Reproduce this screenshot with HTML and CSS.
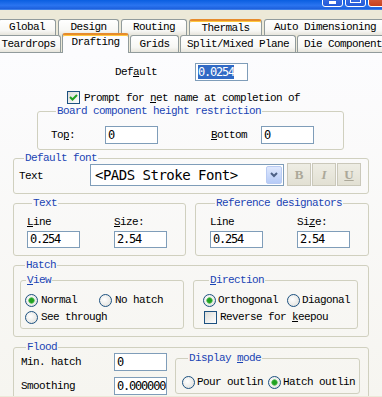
FILE: index.html
```html
<!DOCTYPE html>
<html lang="en">
<head>
  <meta charset="UTF-8" />
  <meta name="viewport" content="width=device-width, initial-scale=1.0" />
  <title>Preferences</title>
  <link rel="stylesheet" href="styles.css">
</head>
<body>
  <div class="titlebar">
    <span class="title">Preferences</span>
    <div class="winbtns">
      <span class="wb wb-min"></span>
      <span class="wb wb-max"></span>
      <span class="wb wb-close"></span>
    </div>
  </div>

  <div class="tabs">
    <div class="tabrow row1">
      <div class="tab t-global">Global</div>
      <div class="tab t-design">Design</div>
      <div class="tab t-routing">Routing</div>
      <div class="tab t-thermals hot">Thermals</div>
      <div class="tab t-autodim">Auto Dimensioning</div>
    </div>
    <div class="tabrow row2">
      <div class="tab t-teardrops">Teardrops</div>
      <div class="tab t-drafting active">Drafting</div>
      <div class="tab t-grids">Grids</div>
      <div class="tab t-split">Split/Mixed Plane</div>
      <div class="tab t-die">Die Component</div>
    </div>
  </div>

  <div class="panel">
    <div class="default-row">
      <span class="lbl-default">Def<u>a</u>ult</span>
      <div class="field"><span class="hl">0.0254</span></div>
    </div>

    <div class="check-row">
      <span class="check">
        <svg width="11" height="11" viewBox="0 0 11 11"><path d="M2 5 L4.5 7.5 L9 3" fill="none" stroke="#21a121" stroke-width="2"/></svg>
      </span>
      <span class="check-label">Prompt for <u>n</u>et name at completion of</span>
    </div>

    <fieldset class="grp g-board">
      <legend>Board component height restriction</legend>
      <div class="board-row">
        <span class="lbl-top">To<u>p</u>:</span>
        <div class="field">0</div>
        <span class="lbl-bottom"><u>B</u>ottom</span>
        <div class="field">0</div>
      </div>
    </fieldset>

    <fieldset class="grp g-font">
      <legend>Default font</legend>
      <div class="font-row">
        <span class="lbl-text">Text</span>
        <div class="combo">
          <span class="combo-text">&lt;PADS Stroke Font&gt;</span>
          <span class="combo-btn">
            <svg width="8" height="6" viewBox="0 0 8 6"><path d="M1 1 L4 4 L7 1" fill="none" stroke="#4d6185" stroke-width="2"/></svg>
          </span>
        </div>
        <div class="fbtns">
          <span class="fbtn">B</span>
          <span class="fbtn fi">I</span>
          <span class="fbtn fu">U</span>
        </div>
      </div>
    </fieldset>

    <div class="two">
      <fieldset class="grp g-text">
        <legend>Text</legend>
        <div class="pair">
          <div class="col">
            <span class="lbl"><u>L</u>ine</span>
            <div class="field f17">0.254</div>
          </div>
          <div class="col">
            <span class="lbl"><u>S</u>ize:</span>
            <div class="field f17">2.54</div>
          </div>
        </div>
      </fieldset>
      <fieldset class="grp g-ref">
        <legend>Reference designators</legend>
        <div class="pair">
          <div class="col">
            <span class="lbl">Line</span>
            <div class="field f17">0.254</div>
          </div>
          <div class="col">
            <span class="lbl">Si<u>z</u>e:</span>
            <div class="field f17">2.54</div>
          </div>
        </div>
      </fieldset>
    </div>

    <fieldset class="grp g-hatch">
      <legend>Hatch</legend>
      <div class="hatch-row">
        <fieldset class="grp g-view">
          <legend><u>V</u>iew</legend>
          <div class="opt-row">
            <span class="opt w-normal"><span class="radio on"></span>Normal</span>
            <span class="opt"><span class="radio"></span>No hatch</span>
          </div>
          <div class="opt-row">
            <span class="opt"><span class="radio"></span>See through</span>
          </div>
        </fieldset>
        <fieldset class="grp g-dir">
          <legend><u>D</u>irection</legend>
          <div class="opt-row">
            <span class="opt w-ortho"><span class="radio on"></span>Orthogonal</span>
            <span class="opt"><span class="radio"></span>Diagonal</span>
          </div>
          <div class="opt-row">
            <span class="opt opt-check"><span class="check"></span><span>Reverse for <u>k</u>eepou</span></span>
          </div>
        </fieldset>
      </div>
    </fieldset>

    <fieldset class="grp g-flood">
      <legend>Flood</legend>
      <div class="flood-body">
        <div class="flood-left">
          <div class="flood-row">
            <span class="lbl-flood">Min. hatch</span>
            <div class="field">0</div>
          </div>
          <div class="flood-row">
            <span class="lbl-flood">Smoothing</span>
            <div class="field">0.000000</div>
          </div>
        </div>
        <fieldset class="grp g-display">
          <legend>Display <u>m</u>ode</legend>
          <div class="opt-row">
            <span class="opt w-pour"><span class="radio"></span>Pour outlin</span>
            <span class="opt"><span class="radio on"></span>Hatch outlin</span>
          </div>
        </fieldset>
      </div>
    </fieldset>
  </div>
</body>
</html>
```

FILE: styles.css
```css
* {
  box-sizing: border-box;
}
body {
  margin: 0;
  width: 382px;
  height: 397px;
  overflow: hidden;
  background-color: #ece9d8;
  color: #000;
  font-family: "Liberation Mono", monospace;
  font-size: 11px;
  line-height: 12px;
  letter-spacing: -0.6px;
}
u {
  text-decoration: underline;
  text-underline-offset: 1px;
}

/* title bar, mostly cut off at the top */
.titlebar {
  height: 10px;
  overflow: hidden;
  display: flex;
  justify-content: space-between;
  background: linear-gradient(#0a5ee0, #2a74f0 60%, #1d5fdc);
  border-bottom: 1px solid #3d7ee8;
}
.title {
  margin: -10px 0 0 6px;
  color: #fff;
  font-size: 13px;
  line-height: 14px;
  font-weight: bold;
  letter-spacing: 0;
}
.winbtns {
  display: flex;
  gap: 2px;
  margin-top: -14px;
  margin-right: -7px;
}
.wb {
  width: 21px;
  height: 21px;
  border: 1px solid #fff;
  border-radius: 3px;
  background: linear-gradient(#5a8cf2, #2359d8);
  display: flex;
  align-items: flex-end;
  justify-content: center;
}
.wb-min::after {
  content: "";
  width: 7px;
  height: 3px;
  margin-bottom: 2px;
  background: #fff;
}
.wb-max::after {
  content: "";
  width: 9px;
  height: 8px;
  margin-bottom: 3px;
  border: 1px solid #fff;
  border-top-width: 2px;
}
.wb-close {
  background: linear-gradient(#e98266, #c8401e);
}

/* tabs */
.tabs {
  padding-top: 9px;
}
.tabrow {
  display: flex;
}
.row1 {
  gap: 2px;
  margin-left: -2px;
  height: 16px;
}
.row2 {
  gap: 1px;
  margin-left: -4px;
  height: 17px;
}
.tab {
  flex: none;
  border: 1px solid #919b9c;
  border-bottom: none;
  border-radius: 3px 3px 0 0;
  background: linear-gradient(#ffffff, #f7f7f4 70%, #e7e5dc);
  text-align: center;
  line-height: 15px;
  white-space: nowrap;
}
.row2 .tab {
  line-height: 16px;
}
.tab.hot {
  border-top: 2px solid #e68b2c;
  box-shadow: inset 0 1px 0 #ffc73c;
  line-height: 14px;
}
.tab.active {
  position: relative;
  z-index: 1;
  margin-top: -2px;
  height: 20px;
  background: #fcfcfe;
  border-top: 2px solid #e68b2c;
  box-shadow: inset 0 1px 0 #ffc73c;
  line-height: 14px;
}
.t-global { width: 58px; }
.t-design { width: 61px; }
.t-routing { width: 66px; }
.t-thermals { width: 73px; }
.t-autodim { width: 122px; }
.t-teardrops { width: 65px; }
.t-drafting { width: 67px; }
.t-grids { width: 49px; }
.t-split { width: 116px; }
.t-die { width: 92px; }

/* panel */
.panel {
  height: 344px;
  border-top: 1px solid #919b9c;
  background: linear-gradient(#fcfcfe, #f6f5f0);
  overflow: hidden;
}

.field {
  flex: none;
  width: 53px;
  height: 18px;
  padding-left: 2px;
  border: 1px solid #7f9db9;
  background: #fff;
  font-family: "DejaVu Sans Mono", monospace;
  font-size: 12px;
  line-height: 16px;
  letter-spacing: -1.2px;
  white-space: nowrap;
  overflow: hidden;
}
.field.f17 {
  height: 17px;
  line-height: 15px;
}
.hl {
  background: #316ac5;
  color: #fff;
}

.default-row {
  display: flex;
  align-items: center;
  margin: 10px 0 0 115px;
}
.lbl-default {
  width: 80px;
}

.check-row {
  display: flex;
  align-items: center;
  margin: 10px 0 0 67px;
  gap: 4px;
}
.check {
  flex: none;
  width: 13px;
  height: 13px;
  border: 1px solid #1c5180;
  background: linear-gradient(135deg, #dcdcd7, #fff);
}
.check svg {
  display: block;
}

/* group boxes */
.grp {
  margin: 0;
  min-width: 0;
  border: 1px solid #d0d0bf;
  border-radius: 3px;
}
.grp legend {
  margin-left: 5px;
  padding: 0 1px;
  color: #1a44b4;
  line-height: 12px;
  white-space: nowrap;
}

.g-board {
  margin: 1px 0 0 37px;
  width: 307px;
  padding: 9px 0 5px 13px;
}
.board-row {
  display: flex;
  align-items: center;
}
.lbl-top {
  width: 54px;
}
.lbl-bottom {
  width: 50px;
  margin-left: 53px;
}

.g-font {
  margin: 2px 0 0 13px;
  width: 356px;
  padding: 0 0 7px 5px;
}
.font-row {
  display: flex;
  align-items: flex-start;
}
.lbl-text {
  width: 71px;
  margin-top: 6px;
}
.combo {
  width: 194px;
  height: 22px;
  border: 1px solid #7f9db9;
  background: #fff;
  display: flex;
  align-items: center;
}
.combo-text {
  flex: 1;
  padding-left: 4px;
  font-family: "DejaVu Sans Mono", monospace;
  font-size: 14px;
  letter-spacing: -0.5px;
  white-space: nowrap;
}
.combo-btn {
  width: 16px;
  height: 18px;
  margin-right: 1px;
  border: 1px solid #b9cbf3;
  border-radius: 2px;
  background: linear-gradient(#dfe8fd, #b6cbf7);
  display: flex;
  align-items: center;
  justify-content: center;
}
.combo-btn svg {
  display: block;
}
.fbtns {
  display: flex;
  gap: 1px;
  margin: -1px 0 0 3px;
}
.fbtn {
  width: 24px;
  height: 23px;
  border: 1px solid #cac8ba;
  background: linear-gradient(#eeede4, #e2e0d3);
  color: #aca899;
  font-family: "Liberation Serif", serif;
  font-size: 13px;
  font-weight: bold;
  letter-spacing: 0;
  display: flex;
  align-items: center;
  justify-content: center;
}
.fi {
  font-style: italic;
}
.fu {
  text-decoration: underline;
}

.two {
  display: flex;
  gap: 9px;
  margin: 3px 0 0 13px;
}
.g-text {
  width: 173px;
  padding: 7px 0 7px 13px;
}
.g-ref {
  width: 174px;
  padding: 7px 0 7px 14px;
}
.pair {
  display: flex;
  gap: 34px;
}
.col {
  width: 53px;
  display: flex;
  flex-direction: column;
  gap: 3px;
}

.g-hatch {
  margin: 3px 0 0 13px;
  width: 356px;
  padding: 3px 0 7px 6px;
}
.hatch-row {
  display: flex;
  gap: 9px;
}
.g-view {
  width: 164px;
  padding: 6px 0 3px 4px;
}
.g-view legend {
  margin-left: 1px;
}
.g-dir {
  width: 165px;
  padding: 6px 0 3px 9px;
}
.g-dir legend {
  margin-left: 6px;
}
.opt-row {
  display: flex;
  align-items: center;
  height: 16px;
  margin-bottom: 1px;
}
.opt-row:last-child {
  margin-bottom: 0;
}
.opt {
  display: flex;
  align-items: center;
  gap: 3px;
  white-space: nowrap;
}
.g-dir .opt,
.g-display .opt {
  gap: 2px;
}
.g-dir .opt-check {
  gap: 3px;
  margin-left: 1px;
}
.w-normal { width: 74px; }
.w-ortho { width: 84px; }
.w-pour { width: 86px; }
.radio {
  flex: none;
  width: 13px;
  height: 13px;
  border: 1px solid #1c5180;
  border-radius: 50%;
  background: radial-gradient(circle at 40% 40%, #fff, #dcdcd7);
}
.radio.on {
  background:
    radial-gradient(circle, #21a121 0, #21a121 2px, #7fce7f 3px, transparent 3.5px),
    radial-gradient(circle at 40% 40%, #fff, #dcdcd7);
}

.g-flood {
  margin: 4px 0 0 13px;
  width: 356px;
  height: 80px;
  padding: 0 0 0 7px;
}
.flood-body {
  display: flex;
  align-items: flex-start;
}
.flood-left {
  width: 146px;
  display: flex;
  flex-direction: column;
  gap: 6px;
}
.flood-row {
  display: flex;
  align-items: center;
}
.lbl-flood {
  width: 93px;
}
.g-display {
  margin: -1px 0 0 8px;
  width: 185px;
  padding: 10px 0 3px 6px;
}
.g-display legend {
  margin-left: 6px;
}
```
